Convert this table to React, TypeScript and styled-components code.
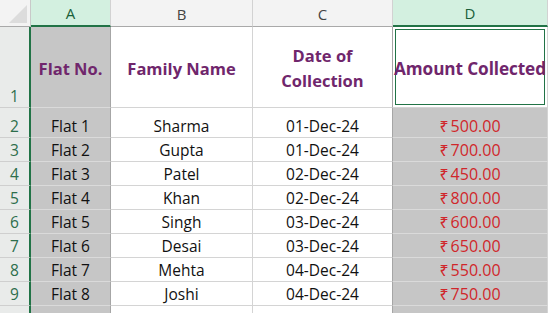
import React from "react";
import styled, { createGlobalStyle, css } from "styled-components";

const Global = createGlobalStyle`
  html, body { margin: 0; padding: 0; background: #ffffff; overflow: hidden; }
  body { font-family: "Open Sans", "Noto Sans", sans-serif; }
`;

const SELECT_FILL = "#c6c6c6";
const GRID = "#d4d4d4";
const GREEN = "#217346";

const Sheet = styled.div`
  display: grid;
  grid-template-columns: 31px 80px 142px 140px 155px;
  grid-template-rows: 27px 81px 30px repeat(8, 24px);
  width: 548px;
  height: 313px;
  overflow: hidden;
  font-family: "Open Sans", "Noto Sans", sans-serif;
`;

const Corner = styled.div`
  background: #f3f3f3;
  border-right: 1px solid #c9c9c9;
  border-bottom: 1px solid #a9a9a9;
  display: flex;
  align-items: flex-end;
  justify-content: flex-end;
  padding: 0 3px 3px 0;
  box-sizing: border-box;
`;

const ColHeader = styled.div<{ $selected?: boolean }>`
  box-sizing: border-box;
  display: flex;
  align-items: center;
  justify-content: center;
  font-size: 15px;
  padding-top: 1px;
  background: #f3f3f3;
  color: #444;
  border-right: 1px solid #d2d2d2;
  border-bottom: 1px solid #a9a9a9;
  ${(p) =>
    p.$selected &&
    css`
      background: #d3f0e0;
      color: #1a5f3a;
      border-bottom: 2px solid ${GREEN};
    `}
`;

const RowHeader = styled.div<{ $selected?: boolean }>`
  box-sizing: border-box;
  display: flex;
  align-items: flex-end;
  justify-content: center;
  padding-bottom: 0;
  font-size: 15.5px;
  line-height: 21px;
  background: #eeeeee;
  color: #555;
  border-bottom: 1px solid #cfcfcf;
  border-right: 1px solid #a9a9a9;
  ${(p) =>
    p.$selected &&
    css`
      color: #2d6e4c;
      background: #e9ebea;
      border-right: 2px solid ${GREEN};
    `}
`;

const Cell = styled.div<{ $shaded?: boolean; $edgeRight?: boolean }>`
  box-sizing: border-box;
  display: flex;
  align-items: flex-end;
  justify-content: center;
  padding-bottom: 0;
  font-size: 15.5px;
  line-height: 21px;
  color: #111;
  white-space: nowrap;
  background: ${(p) => (p.$shaded ? SELECT_FILL : "#ffffff")};
  border-bottom: 1px solid ${(p) => (p.$shaded ? "#dadada" : GRID)};
  border-right: 1px solid ${(p) => (p.$edgeRight ? "#a6a6a6" : GRID)};
`;

const HeadCell = styled(Cell)<{ $active?: boolean }>`
  align-items: center;
  padding: 2px 0 0;
  font-weight: 700;
  font-size: 16.5px;
  line-height: 25px;
  color: #70266c;
  text-align: center;
  white-space: normal;
  ${(p) =>
    p.$active &&
    css`
      box-shadow: inset 0 0 0 2px #ffffff, inset 0 0 0 3px ${GREEN};
      white-space: nowrap;
      font-size: 17.2px;
      letter-spacing: -0.1px;
    `}
`;

const Amount = styled.span`
  color: #d0262b;
  font-size: 16px;
`;

const Rupee = styled.span`
  margin-right: 2px;
`;

const rows = [
  ["Flat 1", "Sharma", "01-Dec-24", "500.00"],
  ["Flat 2", "Gupta", "01-Dec-24", "700.00"],
  ["Flat 3", "Patel", "02-Dec-24", "450.00"],
  ["Flat 4", "Khan", "02-Dec-24", "800.00"],
  ["Flat 5", "Singh", "03-Dec-24", "600.00"],
  ["Flat 6", "Desai", "03-Dec-24", "650.00"],
  ["Flat 7", "Mehta", "04-Dec-24", "550.00"],
  ["Flat 8", "Joshi", "04-Dec-24", "750.00"],
  ["", "", "", ""],
];

export default function App() {
  return (
    <>
      <Global />
      <Sheet>
        <Corner>
          <svg width="18" height="18" viewBox="0 0 18 18">
            <polygon points="18,0 18,18 0,18" fill="#dcdcdc" />
          </svg>
        </Corner>
        <ColHeader $selected>A</ColHeader>
        <ColHeader>B</ColHeader>
        <ColHeader>C</ColHeader>
        <ColHeader $selected>D</ColHeader>

        <RowHeader $selected>1</RowHeader>
        <HeadCell $shaded $edgeRight>Flat No.</HeadCell>
        <HeadCell>Family Name</HeadCell>
        <HeadCell $edgeRight>
          Date of
          <br />
          Collection
        </HeadCell>
        <HeadCell $active>Amount Collected</HeadCell>

        {rows.map((r, i) => (
          <React.Fragment key={i}>
            <RowHeader $selected>{r[0] ? i + 2 : ""}</RowHeader>
            <Cell $shaded $edgeRight>{r[0]}</Cell>
            <Cell>{r[1]}</Cell>
            <Cell $edgeRight>{r[2]}</Cell>
            <Cell $shaded>
              {r[3] && (
                <Amount>
                  <Rupee>₹</Rupee>
                  {r[3]}
                </Amount>
              )}
            </Cell>
          </React.Fragment>
        ))}
      </Sheet>
    </>
  );
}
